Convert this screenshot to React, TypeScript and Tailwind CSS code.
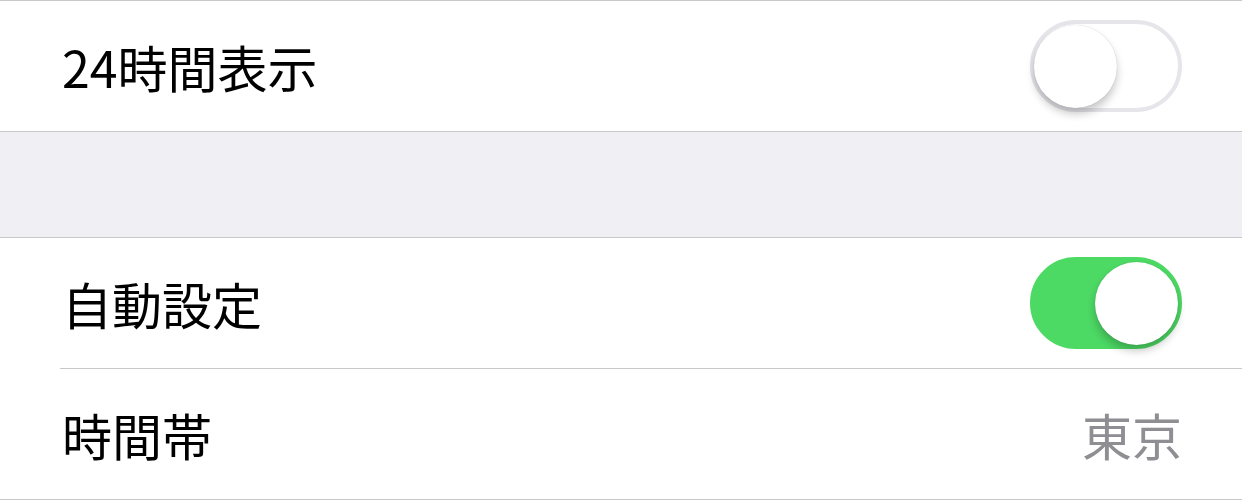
import React from 'react';

const font = { fontFamily: '"Noto Sans CJK JP", "Noto Sans", sans-serif' };

const Toggle = ({ on }: { on: boolean }) => (
  <div
    className={`flex h-[92px] w-[152px] shrink-0 items-center rounded-full border-[4px] ${
      on ? 'justify-end border-[#4cd964] bg-[#4cd964]' : 'justify-start border-[#e5e5ea] bg-white'
    }`}
  >
    <div className="h-[83px] w-[83px] rounded-full bg-white shadow-[0_6px_8px_rgba(0,0,0,0.22),0_0_1px_rgba(0,0,0,0.2)]" />
  </div>
);

const Row = ({ label, children }: { label: string; children?: React.ReactNode }) => (
  <div className="flex h-[130px] items-center justify-between bg-white pl-[62px] pr-[60px]">
    <span className="text-[50px] leading-none text-black">{label}</span>
    {children}
  </div>
);

const Line = ({ inset }: { inset?: boolean }) => (
  <div className={`h-px bg-[#c8c7cc] ${inset ? 'ml-[60px]' : ''}`} />
);

export default function App() {
  return (
    <div className="h-[501px] w-full overflow-hidden bg-white" style={font}>
      <Line />
      <Row label="24時間表示">
        <Toggle on={false} />
      </Row>
      <Line />
      <div className="h-[105px] bg-[#efeff4]" />
      <Line />
      <Row label="自動設定">
        <Toggle on />
      </Row>
      <Line inset />
      <Row label="時間帯">
        <span className="text-[50px] leading-none text-[#8e8e93]">東京</span>
      </Row>
      <Line />
    </div>
  );
}
